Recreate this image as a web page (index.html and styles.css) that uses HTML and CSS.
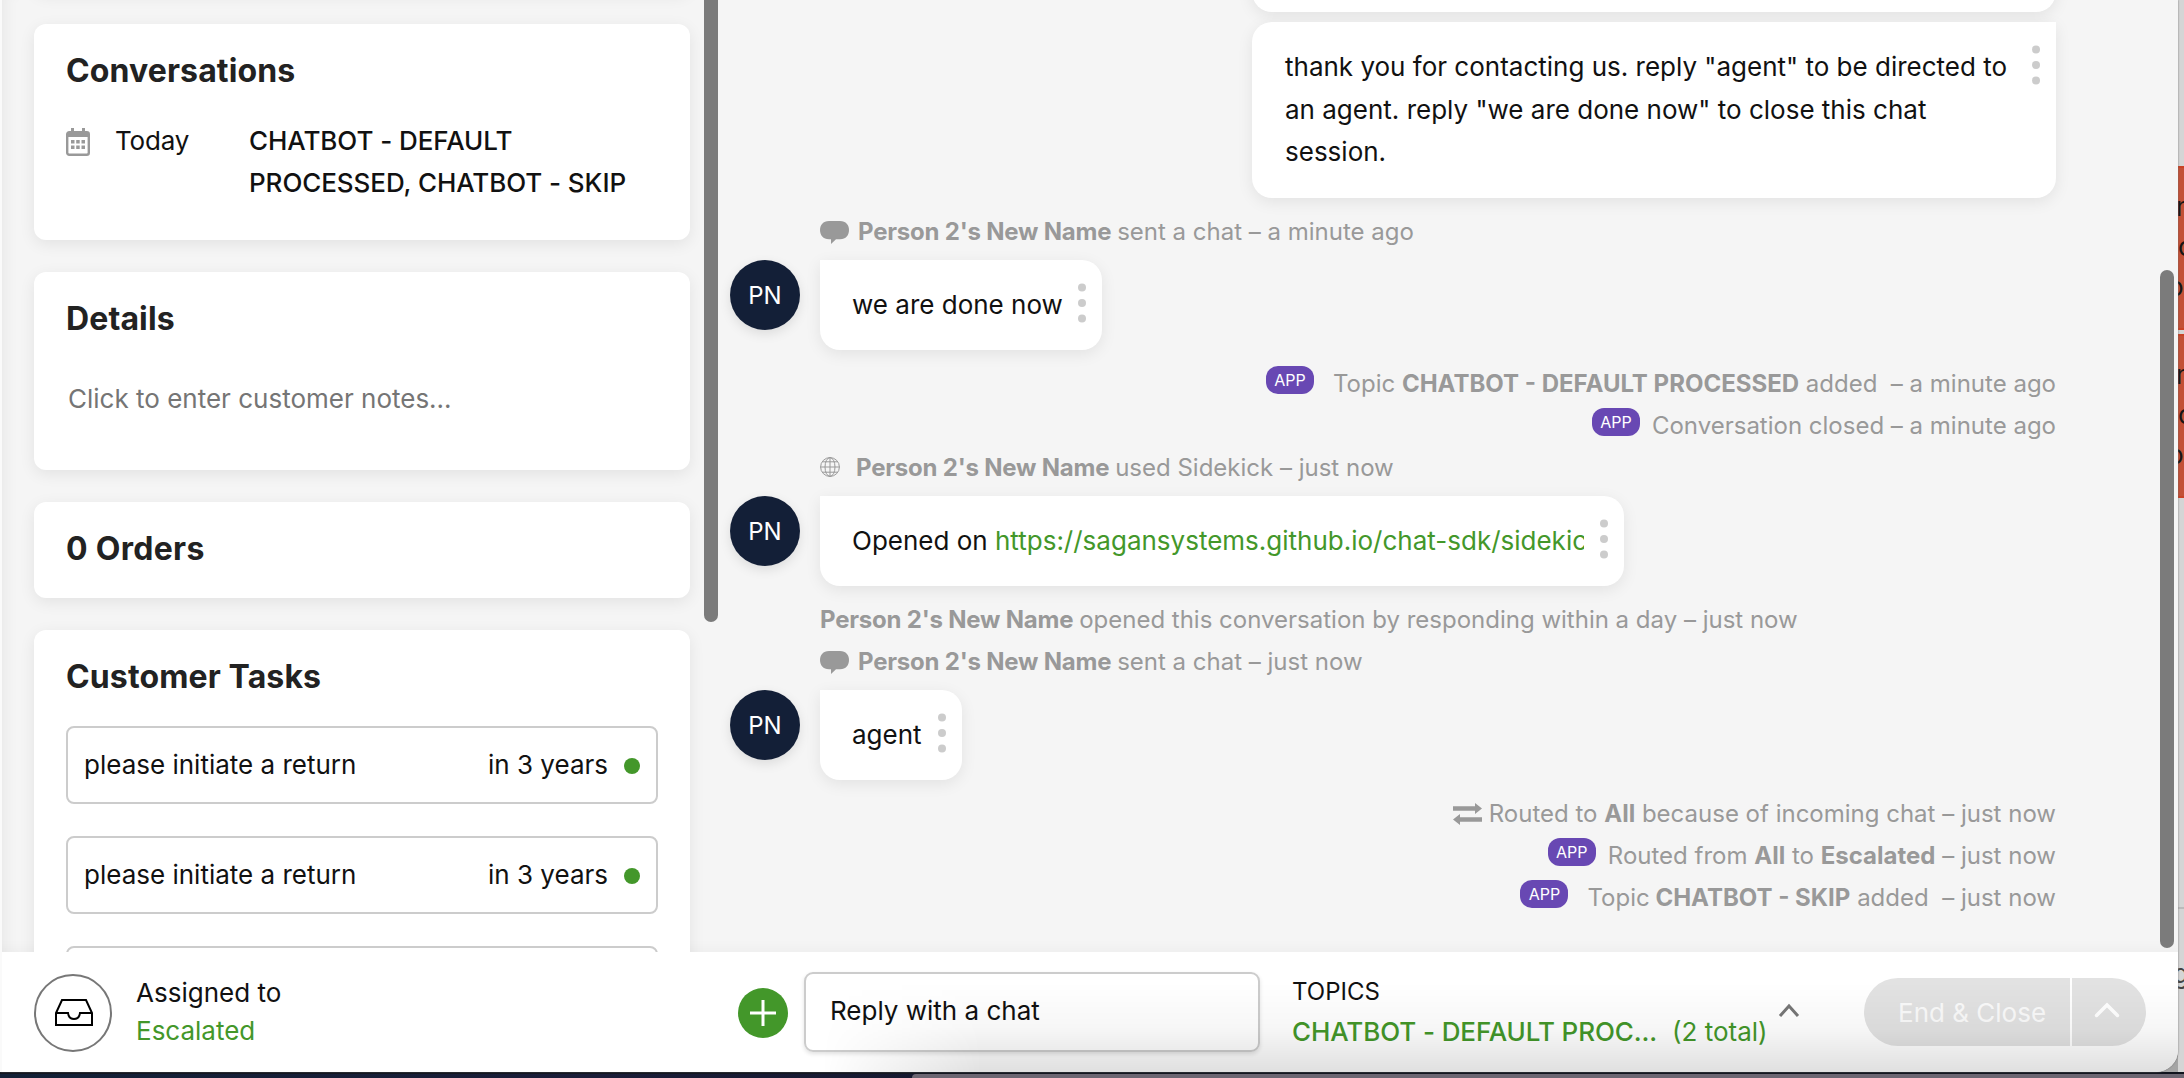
FILE: index.html
```html
<!DOCTYPE html>
<html lang="en">
<head>
<meta charset="utf-8">
<title>Conversation</title>
<link rel="stylesheet" href="styles.css">
</head>
<body>
<svg class="defs" width="0" height="0">
  <symbol id="bubble" viewBox="0 0 29 23"><path d="M9 0h11c6 0 9 4 9 9s-3 9.300-9 9.300h-4L11 23v-4.700H9C3 18.300 0 14 0 9s3-9 9-9z" fill="#999"/></symbol>
  <symbol id="globe" viewBox="0 0 20 20"><g fill="none" stroke="#999" stroke-width="1"><circle cx="10" cy="10" r="9.4"/><ellipse cx="10" cy="10" rx="5" ry="9.4"/><path d="M10 .6v18.800M.6 10h18.800M2.500 4.800h15M2.500 15.200h15"/></g></symbol>
  <symbol id="route" viewBox="0 0 29 22"><path d="M0 3.200h22V0l7 5.500-7 5.500V7.800H0zM29 18.800H7V22l-7-5.500L7 11v3.200h22z" fill="#999"/></symbol>
  <symbol id="dots" viewBox="0 0 8 40"><g fill="#ccc"><circle cx="4" cy="4.500" r="4"/><circle cx="4" cy="20" r="4"/><circle cx="4" cy="35.500" r="4"/></g></symbol>
</svg>
<div class="window">
  <div class="main">
    <aside class="sidebar">
      <section class="card card-prev"></section>
      <section class="card card-conv">
        <h2>Conversations</h2>
        <div class="conv">
          <svg class="cal" viewBox="0 0 24 28" width="24" height="28"><rect x="1.200" y="4.200" width="21.600" height="22.600" rx="2" fill="#fff" stroke="#999" stroke-width="2.400"/><path d="M1 4h22v5H1zM5 0h3v5H5zM16 0h3v5h-3z" fill="#999"/><path d="M5 12h3.500v3.500H5zM10.200 12h3.500v3.500h-3.500zM15.500 12H19v3.500h-3.500zM5 17.500h3.500V21H5zM10.200 17.500h3.500V21h-3.500zM15.500 17.500H19V21h-3.500z" fill="#999"/></svg>
          <span class="day">Today</span>
          <span class="topics-list">CHATBOT - DEFAULT<br>PROCESSED, CHATBOT - SKIP</span>
        </div>
      </section>
      <section class="card card-details">
        <h2>Details</h2>
        <p class="notes">Click to enter customer notes...</p>
      </section>
      <section class="card card-orders"><h2>0 Orders</h2></section>
      <section class="card card-tasks">
        <h2>Customer Tasks</h2>
        <div class="task"><span>please initiate a return</span><span class="due">in 3 years</span><i class="dot"></i></div>
        <div class="task"><span>please initiate a return</span><span class="due">in 3 years</span><i class="dot"></i></div>
        <div class="task"></div>
      </section>
    </aside>
    <div class="scroll scroll-left"></div>
    <div class="chat">
      <div class="msg out prev"></div>
      <div class="msg out reply"><p>thank you for contacting us. reply "agent" to be directed to an agent. reply "we are done now" to close this chat session.</p><svg class="dots"><use href="#dots"/></svg></div>
      <div class="event"><svg class="ic-bubble"><use href="#bubble"/></svg><span><b class="name">Person 2's New Name</b> sent a chat – a minute ago</span></div>
      <div class="row"><span class="avatar">PN</span><div class="msg in m1"><p>we are done now</p><svg class="dots"><use href="#dots"/></svg></div></div>
      <div class="event right"><span class="app wide">APP</span><span>Topic <b>CHATBOT - DEFAULT PROCESSED</b> added &nbsp;– a minute ago</span></div>
      <div class="event right"><span class="app">APP</span><span>Conversation closed – a minute ago</span></div>
      <div class="event"><svg class="ic-globe"><use href="#globe"/></svg><span><b class="name">Person 2's New Name</b> used Sidekick – just now</span></div>
      <div class="row"><span class="avatar">PN</span><div class="msg in m2"><p>Opened on <a>https://sagansystems.github.io/chat-sdk/sidekick</a></p><svg class="dots"><use href="#dots"/></svg></div></div>
      <div class="event"><span><b class="name">Person 2's New Name</b> opened this conversation by responding within a day – just now</span></div>
      <div class="event"><svg class="ic-bubble"><use href="#bubble"/></svg><span><b class="name">Person 2's New Name</b> sent a chat – just now</span></div>
      <div class="row"><span class="avatar">PN</span><div class="msg in m3"><p>agent</p><svg class="dots"><use href="#dots"/></svg></div></div>
      <div class="event right"><svg class="ic-route"><use href="#route"/></svg><span>Routed to <b>All</b> because of incoming chat – just now</span></div>
      <div class="event right"><span class="app">APP</span><span>Routed from <b>All</b> to <b>Escalated</b> – just now</span></div>
      <div class="event right skip"><span class="app wide">APP</span><span>Topic <b>CHATBOT - SKIP</b> added &nbsp;– just now</span></div>
    </div>
    <div class="scroll scroll-right"></div>
  </div>
  <footer class="footer">
    <div class="assign">
      <span class="inbox"><svg width="38" height="28" viewBox="0 0 38 28" fill="none" stroke="#000" stroke-width="2"><path d="M1 14v12h36V14L31 1H7L1 14h12c.500 4 3 6 6 6s5.500-2 6-6h12"/></svg></span>
      <div class="two"><div>Assigned to</div><div class="green">Escalated</div></div>
    </div>
    <span class="plus"><svg width="26" height="26" viewBox="0 0 26 26"><path d="M13 0v26M0 13h26" stroke="#fff" stroke-width="3"/></svg></span>
    <div class="input">Reply with a chat</div>
    <div class="topics">
      <div class="label">TOPICS</div>
      <div class="green"><span class="med">CHATBOT - DEFAULT PROC...</span><span class="total">(2 total)</span></div>
    </div>
    <svg class="chev" width="22" height="15" viewBox="0 0 22 15"><path d="M2 13l9-10 9 10" fill="none" stroke="#777" stroke-width="3"/></svg>
    <div class="button"><span class="end">End &amp; Close</span><span class="more"><svg width="26" height="16" viewBox="0 0 26 16"><path d="M2.500 13.500L13 3l10.500 10.500" fill="none" stroke="#fff" stroke-width="3.500" stroke-linecap="round"/></svg></span></div>
    <div class="shade"></div>
  </footer>
</div>
<div class="behind">
  <div class="ticket"><span class="n">n</span><span>o</span><span class="p">o</span></div>
  <div class="ticket"><span class="n">n</span><span>o</span><span class="p">o</span></div>
  <div class="pane"><span>g</span></div>
</div>
<div class="dock"><div class="dock-window"></div></div>
</body>
</html>
```
FILE: styles.css
```css
* { box-sizing: border-box; }
body { margin: 0; width: 2184px; height: 1078px; overflow: hidden; display: grid; grid-template-columns: 2178px 6px; grid-template-rows: 1072px 6px; background: #a5a5a5; font-family: Inter, "Liberation Sans", sans-serif; font-size: 26px; color: #111; }
.defs { position: absolute; }
h2, p { margin: 0; }
.window { height: 1072px; display: flex; flex-direction: column; background: #f5f5f5; border-radius: 0 0 22px 0; overflow: hidden; border-left: 2px solid #fafafa; box-shadow: 0 0 2px #666; z-index: 1; }
.main { height: 952px; display: flex; overflow: hidden; box-shadow: inset 0 -14px 14px -12px rgba(0,0,0,.04), inset 14px 0 14px -10px rgba(0,0,0,.05); }
.sidebar { width: 656px; margin-left: 32px; display: flex; flex-direction: column; gap: 32px; flex: none; }
.card { background: #fff; border-radius: 12px; box-shadow: 0 4px 16px rgba(0,0,0,.08); padding: 24px 32px 0; flex: none; }
.card h2 { font-size: 32px; line-height: 46px; font-weight: 700; color: #222; letter-spacing: .12px; }
.card-prev { height: 40px; margin-top: -48px; padding: 0; }
.card-conv { height: 216px; }
.card-details { height: 198px; }
.card-orders { height: 96px; }
.card-orders h2 { letter-spacing: .3px; }
.card-tasks { height: 500px; }
.conv { display: flex; line-height: 42px; margin-top: 26px; }
.cal { margin-top: 8px; }
.day { margin-left: 25px; width: 134px; letter-spacing: -.2px; }
.topics-list { font-weight: 500; white-space: nowrap; letter-spacing: -.07px; }
.notes { color: #757575; margin: 37px 0 0 2px; line-height: 40px; }
.task { height: 78px; border: 2px solid #ccc; border-radius: 8px; margin-bottom: 32px; display: flex; align-items: center; padding: 0 16px; }
.task span { margin-top: -1px; }
.card-tasks h2 { margin-bottom: 26px; }
.due { margin-left: auto; }
.dot { width: 16px; height: 16px; border-radius: 50%; background: #43972a; margin: 1px 0 0 16px; }
.scroll { width: 14px; background: #7b7b7b; flex: none; }
.scroll-left { margin-left: 14px; height: 622px; border-radius: 0 0 7px 7px; }
.scroll-right { height: 678px; margin: 270px 0 0 104px; border-radius: 7px; }
.chat { width: 1326px; margin-left: 12px; flex: none; display: flex; flex-direction: column; }
.msg { background: #fff; box-shadow: 0 4px 16px rgba(0,0,0,.08); position: relative; flex: none; }
.out { width: 804px; align-self: flex-end; border-radius: 20px 0 20px 20px; }
.prev { height: 60px; margin-top: -48px; }
.reply { height: 176px; margin: 10px 0 12px; padding: 24px 46px 0 33px; line-height: 42.500px; }
.dots { position: absolute; width: 8px; height: 40px; right: 16px; top: 23px; }
.event { height: 42px; line-height: 44px; display: flex; padding-left: 90px; font-size: 24px; color: #999; white-space: nowrap; flex: none; }
.event.right { padding-left: 0; justify-content: flex-end; }
.name { letter-spacing: -.2px; margin-right: -1px; }
.ic-bubble { width: 29px; height: 23px; margin: 11px 9px 0 0; }
.ic-globe { width: 20px; height: 20px; margin: 11px 16px 0 0; }
.ic-route { width: 29px; height: 22px; margin: 11px 8px 0 0; }
.event.right .ic-route { margin-right: 7px; }
.app { width: 48px; height: 28px; margin: 4px 12px 0 0; border-radius: 12px; background: #6848b3; color: #fff; font-size: 16px; font-weight: 400; line-height: 28px; text-align: center; }
.app.wide { margin-right: 19px; }
.skip b { margin-left: -1px; }
.row { display: flex; margin: 8px 0 12px; gap: 20px; flex: none; }
.avatar { width: 70px; height: 70px; border-radius: 50%; background: #131f37; color: #fff; font-size: 24px; line-height: 72px; text-align: center; box-shadow: 0 4px 12px rgba(0,0,0,.1); }
.in { height: 90px; line-height: 90px; padding-left: 32px; border-radius: 0 20px 20px 20px; }
.in p { white-space: nowrap; overflow: hidden; }
.m1 { width: 282px; }
.m2 { width: 804px; }
.m2 p { width: 732px; }
.m3 { width: 142px; }
.m2 a, .green { color: #43972a; }
.footer { height: 120px; background: #fff; display: flex; position: relative; flex: none; }
.assign { width: 704px; display: flex; padding: 22px 0 0 32px; }
.inbox { width: 78px; height: 78px; border: 2px solid #777; border-radius: 50%; display: flex; align-items: center; justify-content: center; padding-left: 2px; }
.two { margin-left: 24px; line-height: 38px; }
.plus { width: 50px; height: 50px; margin: 36px 16px 0 32px; background: #43972a; border-radius: 50%; display: flex; align-items: center; justify-content: center; }
.input { width: 456px; height: 80px; margin-top: 20px; border: 2px solid #ccc; border-radius: 9px; line-height: 74px; padding-left: 24px; box-shadow: 0 2px 4px rgba(0,0,0,.12); }
.topics { width: 486px; margin: 20px 0 0 32px; line-height: 39px; white-space: nowrap; }
.label { font-size: 24px; line-height: 40px; }
.med { font-weight: 500; letter-spacing: -.1px; }
.total { margin-left: 15px; }
.chev { margin-top: 51px; }
.button { width: 282px; height: 68px; margin: 26px 0 0 64px; border-radius: 34px; background: #e2e2e2; color: #fafafa; display: flex; line-height: 70px; overflow: hidden; }
.end { width: 208px; padding-left: 34px; border-right: 2px solid #fff; white-space: nowrap; }
.more { padding: 24px 0 0 22px; line-height: 0; }
.shade { position: absolute; left: 820px; right: 0; bottom: 0; height: 90px; background: linear-gradient(to bottom, rgba(0,0,0,0), rgba(0,0,0,.03) 50%, rgba(0,0,0,.12)); -webkit-mask-image: linear-gradient(to right, transparent, #000 160px); mask-image: linear-gradient(to right, transparent, #000 160px); }
.behind { background: #d5d5d5; height: 1072px; overflow: hidden; padding-top: 166px; }
.ticket { height: 164px; margin-bottom: 4px; background: #c35036; border: solid #ca4225; border-width: 2px 0; padding-top: 19px; display: flex; flex-direction: column; color: #151515; line-height: 40px; }
.ticket .n { margin-left: -2px; }
.ticket .p { margin-left: -10px; }
.pane { margin-top: 409px; height: 132px; border-top: 2px solid #bbb; padding-top: 45px; color: #444; line-height: 40px; }
.pane span { margin-left: -5px; }
.dock { grid-column: 1 / 3; background: linear-gradient(to right, #132137, #1a1d38 600px, #15182e 1000px); border-top: 2px solid #10131d; }
.dock-window { margin-left: 912px; height: 4px; background: #6c6672; border-radius: 12px 0 0 0; }
```
